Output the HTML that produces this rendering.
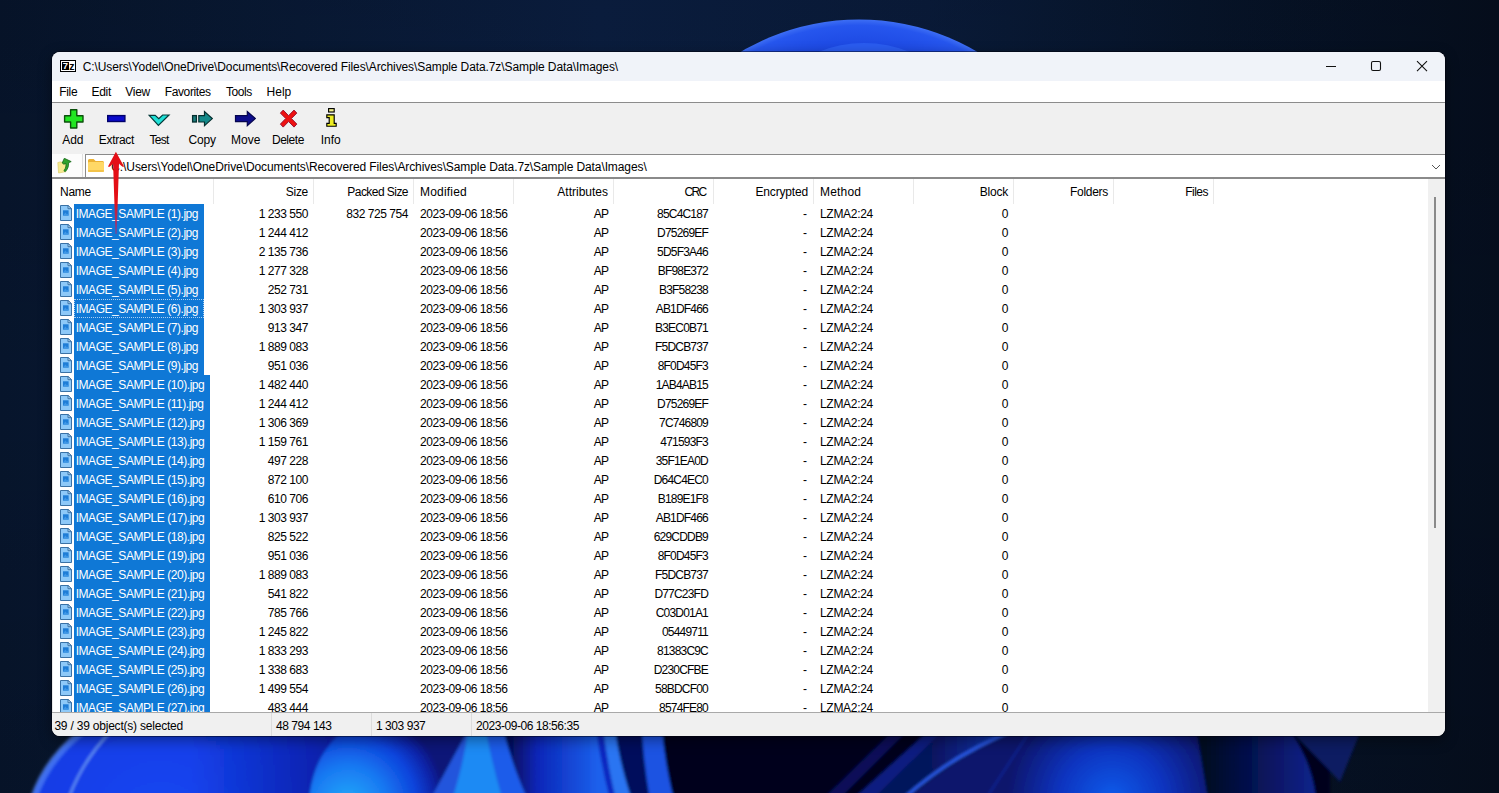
<!DOCTYPE html>
<html lang="en"><head><meta charset="utf-8"><title>7-Zip</title>
<style>
*{box-sizing:border-box}
html,body{margin:0;padding:0}
body{width:1499px;height:793px;overflow:hidden;position:relative;background:#07142a;font-family:"Liberation Sans",sans-serif;font-size:12px;color:#000}
.wall{position:absolute;left:0;top:0}
.win{position:absolute;left:52px;top:52px;width:1393px;height:684px;border-radius:8px;overflow:hidden;background:#f0f0f0;box-shadow:0 0 0 1px rgba(0,0,10,.45),0 4px 14px rgba(0,0,0,.4)}
.tb{position:absolute;left:0;top:0;width:100%;height:29px;background:#f0f3f9}
.ico7{position:absolute;left:8px;top:8px;width:16px;height:12px;border:1px solid #000;background:#fff}
.ico7 .s7{position:absolute;left:1px;top:1px;width:7px;height:8px;background:#000;color:#fff;font:bold 9.5px/8.5px "Liberation Sans",sans-serif;text-align:center;overflow:hidden}
.ico7 .sz{position:absolute;left:8.2px;top:1.8px;width:5.4px;height:9px;color:#000;font:bold 10.5px/6.5px "Liberation Sans",sans-serif;text-align:center;overflow:hidden}
.ttl{position:absolute;left:30.7px;top:8px;line-height:15px;white-space:nowrap;letter-spacing:-.098px}
.ctl{position:absolute;right:1px;top:0}
.mb{position:absolute;left:0;top:29px;width:100%;height:21px;background:#fff}
.mb span{position:absolute;top:4px;line-height:15px;white-space:nowrap}
.tl{position:absolute;left:0;top:50px;width:100%;height:52px;background:#f0f0f0;border-top:1px solid #8c8c8c}
.tl .lb{position:absolute;top:80px;line-height:15px;white-space:nowrap}
.ab{position:absolute;left:0;top:102px;width:100%;height:25px;background:#fcfcfc;border-bottom:2px solid #8a8a8a}
.up{position:absolute;left:5px;top:4px;width:16px;height:16px}
.addr{position:absolute;left:33px;top:0;right:0;height:23px;background:#fff;border-top:1px solid #8a8a8a;border-left:1px solid #8a8a8a;box-shadow:-2px 0 0 #fcfcfc,-3px 0 0 #dedede}
.fold{position:absolute;left:2px;top:4px}
.atx{position:absolute;left:25.3px;top:5px;line-height:15px;white-space:nowrap;letter-spacing:-.098px}
.chev{position:absolute;right:4.5px;top:9px}
.lv{position:absolute;left:0;top:127px;width:100%;height:533px;background:#fff;overflow:hidden;border-left:1px solid #e8e8e8}
.hd{position:absolute;left:0;top:0;width:100%;height:25px}
.h{position:absolute;top:0;height:25px;border-right:1px solid #e9e9e9;line-height:15px;padding:6px 5px 0 7px;white-space:nowrap}
.h.ar{text-align:right}
.r{position:absolute;left:0;width:1180px;height:19px;line-height:21px;white-space:nowrap}
.fi{position:absolute;left:7px;top:1px}
.nm{position:absolute;left:21px;top:0;height:19px;background:#0f78d6;color:#fff;padding-left:1.7px;letter-spacing:-.45px;overflow:hidden}
.nm.w1{width:130px}
.nm.w2{width:136px}
.foc .nm{outline:1px dotted rgba(235,245,255,.7);outline-offset:-1px}
.c{position:absolute;top:0;height:19px}
.num,.dt{letter-spacing:-.45px}
.crc{letter-spacing:-.8px}
.ap{letter-spacing:-.9px}
.mt{letter-spacing:-.3px}
.c1{right:925px}.c2{right:825px}.c3{left:367px}.c4{right:625px}.c5{right:525px}.c6{right:426px}.c7{left:767px}.c8{right:225px}
.sb{position:absolute;right:0;top:0;width:17px;height:100%;background:#f0f0f0}
.th{position:absolute;left:6px;top:18px;width:2px;height:331px;background:#8a8a8a}
.st{position:absolute;left:0;top:660px;width:100%;height:24px;background:#f0f0f0;border-top:1px solid #a9a9a9}
.st span{position:absolute;top:0;height:23px;line-height:15px;padding-top:6px;white-space:nowrap}
.s1{left:2.4px;letter-spacing:-.21px}
.s2{left:219px;padding-left:4px;border-left:1px solid #dcdcdc;letter-spacing:-.45px}
.s3{left:319px;padding-left:4px;border-left:1px solid #dcdcdc;letter-spacing:-.45px}
.s4{left:419px;padding-left:4px;border-left:1px solid #dcdcdc;letter-spacing:-.45px}
.arrow{position:absolute}

</style></head>
<body>
<svg class="wall" width="1499" height="793" viewBox="0 0 1499 793">
  <defs>
    <linearGradient id="bg" x1="0" y1="0" x2="1" y2="0">
      <stop offset="0" stop-color="#07152c"/><stop offset=".4" stop-color="#0b1f42"/><stop offset=".62" stop-color="#0a1c3c"/><stop offset=".8" stop-color="#07152b"/><stop offset="1" stop-color="#050e1e"/>
    </linearGradient>
    <linearGradient id="bgv" x1="0" y1="0" x2="0" y2="1">
      <stop offset="0" stop-color="#000" stop-opacity=".1"/><stop offset=".5" stop-color="#000" stop-opacity="0"/><stop offset="1" stop-color="#000" stop-opacity=".1"/>
    </linearGradient>
    <radialGradient id="gt" cx="859" cy="252.5" r="233" gradientUnits="userSpaceOnUse">
      <stop offset=".88" stop-color="#1c48e2"/><stop offset=".975" stop-color="#2656ee"/><stop offset="1" stop-color="#3d6ef4"/>
    </radialGradient>
    <radialGradient id="ga" cx="160" cy="830" r="330" gradientUnits="userSpaceOnUse">
      <stop offset="0" stop-color="#1648f4"/><stop offset=".5" stop-color="#1038e0"/><stop offset="1" stop-color="#0a1f9c"/>
    </radialGradient>
    <radialGradient id="gb" cx="348" cy="805" r="98" gradientUnits="userSpaceOnUse">
      <stop offset="0" stop-color="#24acfa"/><stop offset=".4" stop-color="#1878f2"/><stop offset=".7" stop-color="#0d44dc"/><stop offset=".88" stop-color="#0a24a8"/><stop offset="1" stop-color="#0a1478"/>
    </radialGradient>
    <linearGradient id="gc" x1="505" y1="0" x2="598" y2="0" gradientUnits="userSpaceOnUse">
      <stop offset="0" stop-color="#050a4c"/><stop offset=".35" stop-color="#0a26b8"/><stop offset="1" stop-color="#1c60ec"/>
    </linearGradient>
    <radialGradient id="gd" cx="1112" cy="800" r="105" gradientUnits="userSpaceOnUse">
      <stop offset="0" stop-color="#0a5cec"/><stop offset=".5" stop-color="#0a34c0"/><stop offset="1" stop-color="#08166c"/>
    </radialGradient>
    <linearGradient id="ge" x1="1205" y1="0" x2="1312" y2="0" gradientUnits="userSpaceOnUse">
      <stop offset="0" stop-color="#030722"/><stop offset=".6" stop-color="#071560"/><stop offset="1" stop-color="#0a2288"/>
    </linearGradient>
    <linearGradient id="gf" x1="930" y1="0" x2="1015" y2="0" gradientUnits="userSpaceOnUse">
      <stop offset="0" stop-color="#06125c"/><stop offset="1" stop-color="#143cc0"/>
    </linearGradient>
    <linearGradient id="gh" x1="190" y1="0" x2="335" y2="0" gradientUnits="userSpaceOnUse"><stop offset="0" stop-color="#0a1fa4" stop-opacity="0"/><stop offset="1" stop-color="#08189a" stop-opacity=".8"/></linearGradient>
    <filter id="b1" x="-5%" y="-20%" width="110%" height="140%"><feGaussianBlur stdDeviation="1.5"/></filter>
    <filter id="b3" x="-5%" y="-30%" width="110%" height="160%"><feGaussianBlur stdDeviation="3"/></filter>
  </defs>
  <rect width="1499" height="793" fill="url(#bg)"/>
  <rect width="1499" height="793" fill="url(#bgv)"/>
  <!-- top bloom -->
  <circle cx="859" cy="252.5" r="233" fill="url(#gt)"/>
  <circle cx="864" cy="164" r="121" fill="#2a5cf0"/>
  <!-- bottom bloom -->
  <g filter="url(#b1)">
    <path d="M28 810C36 778 54 752 84 728H720V810Z" fill="url(#ga)"/>
    <path d="M33 800C42 772 58 750 84 730" fill="none" stroke="#4f80f4" stroke-width="7" opacity=".75"/>
    <path d="M68 800C78 772 92 750 114 728" fill="none" stroke="#6a9cf6" stroke-width="1.8"/>
    <path d="M190 728H345L310 800H190Z" fill="url(#gh)"/>
    <path d="M309 800C312 770 322 748 346 728H470L450 800Z" fill="url(#gb)"/>
    
    <path d="M430 800L468 730L476 730L452 800Z" fill="#2454dc"/>
    <path d="M452 800C460 775 466 750 468 728H486C490 752 496 776 503 800Z" fill="#1b8af4"/>
    <path d="M486 728H503C509 752 517 776 528 800H503C496 776 490 752 486 728Z" fill="#1c5cea"/>
    <path d="M503 728H600L612 800H528C517 776 509 752 503 728Z" fill="url(#gc)"/>
    <path d="M596 728H603C606 752 610 776 616 800H610C604 776 599 752 596 728Z" fill="#0a28c0"/>
    <path d="M603 728H615C618 752 624 776 632 800H616C610 776 606 752 603 728Z" fill="#2c74f2"/>
    <path d="M615 728H642C643 752 646 776 650 800H632C624 776 618 752 615 728Z" fill="#060c5c"/>
    <path d="M642 728H662C664 752 668 776 674 800H650C646 776 643 752 642 728Z" fill="#1a52e2"/>
    <path d="M662 728H1330V800H674C668 776 664 752 662 728Z" fill="#02051e"/>
    <path d="M896 728L822 800H838L910 728Z" fill="#071058"/>
    <path d="M932 728L852 800H872L946 728Z" fill="#0a1e80"/>
    <path d="M946 728H1018C975 745 935 770 900 800H872Z" fill="url(#gf)"/>
    <path d="M1020 728C975 745 935 770 902 800" fill="none" stroke="#2a5cec" stroke-width="3"/>
    <path d="M1022 728C978 746 938 771 906 800H1215L1200 728Z" fill="url(#gd)"/>
    <path d="M1032 728L985 800" fill="none" stroke="#0a2cac" stroke-width="2" opacity=".6"/>
    <path d="M1196 728L1208 800H1316C1314 775 1304 750 1288 728Z" fill="url(#ge)"/>
    <path d="M1288 728H1362L1340 782C1325 765 1305 745 1288 728Z" fill="#091a62"/>
  </g>
</svg>

<div class="win">
  <div class="tb">
    <div class="ico7"><span class="s7">7</span><span class="sz">z</span></div>
    <div class="ttl">C:\Users\Yodel\OneDrive\Documents\Recovered Files\Archives\Sample Data.7z\Sample Data\Images\</div>
    <svg class="ctl" width="140" height="29" viewBox="0 0 140 29">
      <path d="M22 14.5H32" stroke="#111" stroke-width="1.1" fill="none"/>
      <rect x="67.5" y="9.5" width="9" height="9" rx="1.5" fill="none" stroke="#111" stroke-width="1.1"/>
      <path d="M113 9.2L123 19.2M123 9.2L113 19.2" stroke="#111" stroke-width="1.1" fill="none"/>
    </svg>
  </div>
  <div class="mb"><span style="left:7.3px;letter-spacing:-.35px">File</span><span style="left:39.5px;letter-spacing:-.3px">Edit</span><span style="left:73.2px;letter-spacing:-.25px">View</span><span style="left:112.7px;letter-spacing:-.37px">Favorites</span><span style="left:174px;letter-spacing:-.45px">Tools</span><span style="left:214.6px">Help</span></div>
  <div class="tl">
    <svg class="tis" width="300" height="30" viewBox="0 0 300 30" style="position:absolute;left:0;top:3px">
      <!-- Add -->
      <path d="M18.6 3.7H24.8V9.8H31V16H24.8V22H18.6V16H12.6V9.8H18.6Z" fill="#22e622" stroke="#0b4f0b" stroke-width="1.4" stroke-linejoin="round"/>
      <!-- Extract -->
      <rect x="55.7" y="9.6" width="17.2" height="5.9" fill="#0a0acc" stroke="#00006a" stroke-width="1.4"/>
      <!-- Test -->
      <path d="M97.2 9.4H103.2L106.8 12.6L110.6 9H117L106.4 19.4Z" fill="#1fe0d6" stroke="#063a3a" stroke-width="1.2" stroke-linejoin="miter"/>
      <!-- Copy -->
      <rect x="140.6" y="9.6" width="3.8" height="6.4" fill="#1c7f7f" stroke="#062f2f" stroke-width="1.3"/>
      <path d="M146.8 9.6H152.5V5.6L160.3 12.6L152.5 19.6V16H146.8Z" fill="#138a8a" stroke="#062f2f" stroke-width="1.2" stroke-linejoin="miter"/>
      <!-- Move -->
      <path d="M183.5 9.6H195.3V5.5L203.3 12.5L195.3 19.6V15.6H183.5Z" fill="#0d0d8c" stroke="#05054e" stroke-width="1.2"/>
      <!-- Delete -->
      <path transform="translate(0,-.5)" d="M228.4 7.6L231.2 4.6L236.6 10.2L242 4.6L244.8 7.6L239.4 13L244.8 18.6L242 21.6L236.6 16L231.2 21.6L228.4 18.6L233.8 13Z" fill="#ee1111" stroke="#9c1230" stroke-width="1"/>
      <!-- Info -->
      <rect x="276.6" y="2.6" width="5.6" height="3.4" fill="#f4f48a" stroke="#000" stroke-width="1.15"/>
      <path d="M274.8 8.8H282.2V17.4H284.2V20.2H274.8V17.4H277.2V11.6H274.8Z" fill="#eeee22" stroke="#000" stroke-width="1.15" stroke-linejoin="miter"/>
    </svg>
    <span class="lb" style="left:10.2px;top:30px">Add</span>
    <span class="lb" style="left:46.8px;top:30px;letter-spacing:-.3px">Extract</span>
    <span class="lb" style="left:97.5px;top:30px;letter-spacing:-.7px">Test</span>
    <span class="lb" style="left:136.5px;top:30px;letter-spacing:-.18px">Copy</span>
    <span class="lb" style="left:179px;top:30px">Move</span>
    <span class="lb" style="left:219.9px;top:30px;letter-spacing:-.43px">Delete</span>
    <span class="lb" style="left:268.7px;top:30px">Info</span>

  </div>
  <div class="ab">
    <div class="up"><svg width="16" height="16" viewBox="0 0 16 16"><path d="M.8 4.6L3.2 3.9L8.2 5.2L9 13.6L1.6 15Z" fill="#f6ea8e" stroke="#dccd6a" stroke-width=".7"/><path d="M5.2 5L7.3.3L14.2 3.6L11.6 4.7C11.9 8.2 10.6 11.6 8.1 13.7L6.9 12.6C8.9 10.2 9.3 7.7 8.8 5.4L6.9 6.2Z" fill="#2fa32c" stroke="#166a18" stroke-width=".8" stroke-linejoin="round"/></svg></div>
    <div class="addr">
      <svg class="fold" width="16" height="13" viewBox="0 0 16 13"><path d="M0 1.6C0 .7 .7 0 1.6 0H5.6L7.6 2H14.4C15.3 2 16 2.7 16 3.6V11.4C16 12.3 15.3 13 14.4 13H1.6C.7 13 0 12.3 0 11.4Z" fill="#ecb234"/><path d="M0 4.3C0 3.4 .7 2.9 1.6 2.9H14.4C15.3 2.9 16 3.4 16 4.3V11.4C16 12.3 15.3 13 14.4 13H1.6C.7 13 0 12.3 0 11.4Z" fill="#ffd866"/><path d="M0 11C0 12.3 .7 13 1.6 13H14.4C15.3 13 16 12.3 16 11Z" fill="#f3c349"/></svg>
      <span class="atx">C:\Users\Yodel\OneDrive\Documents\Recovered Files\Archives\Sample Data.7z\Sample Data\Images\</span>
      <svg class="chev" width="10" height="6" viewBox="0 0 10 6"><path d="M1 1L5 5L9 1" fill="none" stroke="#555" stroke-width="1"/></svg>
    </div>
  </div>
  <div class="lv">
    <div class="hd"><div class="h al" style="left:0px;width:161px"><span style="letter-spacing:-0.25px">Name</span></div><div class="h ar" style="left:160px;width:101px"><span style="letter-spacing:-0.3px">Size</span></div><div class="h ar" style="left:260px;width:101px"><span style="letter-spacing:-0.55px">Packed Size</span></div><div class="h al" style="left:360px;width:101px"><span style="letter-spacing:0.2px">Modified</span></div><div class="h ar" style="left:460px;width:101px"><span style="letter-spacing:0px">Attributes</span></div><div class="h ar" style="left:560px;width:101px"><span style="letter-spacing:-1.6px;margin-right:2.4px">CRC</span></div><div class="h ar" style="left:660px;width:101px"><span style="letter-spacing:-0.17px">Encrypted</span></div><div class="h al" style="left:760px;width:101px"><span style="letter-spacing:0.2px">Method</span></div><div class="h ar" style="left:860px;width:101px"><span style="letter-spacing:-0.2px">Block</span></div><div class="h ar" style="left:960px;width:101px"><span style="letter-spacing:-0.3px">Folders</span></div><div class="h ar" style="left:1060px;width:101px"><span style="letter-spacing:-0.5px">Files</span></div></div>
    <div class="r" style="top:25px"><svg class="fi" width="12" height="16" viewBox="0 0 12 16"><path d="M.5 .5H8L11.5 3.7V15.5H.5Z" fill="#8ec9f8" stroke="#3a72a6"/><path d="M8 .5V3.7H11.5Z" fill="#c2e2fb" stroke="#3a72a6" stroke-linejoin="round"/><rect x="3" y="5.3" width="5.6" height="5.3" fill="#1f7dd6"/><path d="M3 10.6L5.4 7.6L7 9.4L8.6 8V10.6Z" fill="#3f97e6"/></svg><span class="nm w1">IMAGE_SAMPLE (1).jpg</span><span class="c c1 num">1 233 550</span><span class="c c2 num">832 725 754</span><span class="c c3 dt">2023-09-06 18:56</span><span class="c c4 ap">AP</span><span class="c c5 crc">85C4C187</span><span class="c c6">-</span><span class="c c7 mt">LZMA2:24</span><span class="c c8 num">0</span></div><div class="r" style="top:44px"><svg class="fi" width="12" height="16" viewBox="0 0 12 16"><path d="M.5 .5H8L11.5 3.7V15.5H.5Z" fill="#8ec9f8" stroke="#3a72a6"/><path d="M8 .5V3.7H11.5Z" fill="#c2e2fb" stroke="#3a72a6" stroke-linejoin="round"/><rect x="3" y="5.3" width="5.6" height="5.3" fill="#1f7dd6"/><path d="M3 10.6L5.4 7.6L7 9.4L8.6 8V10.6Z" fill="#3f97e6"/></svg><span class="nm w1">IMAGE_SAMPLE (2).jpg</span><span class="c c1 num">1 244 412</span><span class="c c2 num"></span><span class="c c3 dt">2023-09-06 18:56</span><span class="c c4 ap">AP</span><span class="c c5 crc">D75269EF</span><span class="c c6">-</span><span class="c c7 mt">LZMA2:24</span><span class="c c8 num">0</span></div><div class="r" style="top:63px"><svg class="fi" width="12" height="16" viewBox="0 0 12 16"><path d="M.5 .5H8L11.5 3.7V15.5H.5Z" fill="#8ec9f8" stroke="#3a72a6"/><path d="M8 .5V3.7H11.5Z" fill="#c2e2fb" stroke="#3a72a6" stroke-linejoin="round"/><rect x="3" y="5.3" width="5.6" height="5.3" fill="#1f7dd6"/><path d="M3 10.6L5.4 7.6L7 9.4L8.6 8V10.6Z" fill="#3f97e6"/></svg><span class="nm w1">IMAGE_SAMPLE (3).jpg</span><span class="c c1 num">2 135 736</span><span class="c c2 num"></span><span class="c c3 dt">2023-09-06 18:56</span><span class="c c4 ap">AP</span><span class="c c5 crc">5D5F3A46</span><span class="c c6">-</span><span class="c c7 mt">LZMA2:24</span><span class="c c8 num">0</span></div><div class="r" style="top:82px"><svg class="fi" width="12" height="16" viewBox="0 0 12 16"><path d="M.5 .5H8L11.5 3.7V15.5H.5Z" fill="#8ec9f8" stroke="#3a72a6"/><path d="M8 .5V3.7H11.5Z" fill="#c2e2fb" stroke="#3a72a6" stroke-linejoin="round"/><rect x="3" y="5.3" width="5.6" height="5.3" fill="#1f7dd6"/><path d="M3 10.6L5.4 7.6L7 9.4L8.6 8V10.6Z" fill="#3f97e6"/></svg><span class="nm w1">IMAGE_SAMPLE (4).jpg</span><span class="c c1 num">1 277 328</span><span class="c c2 num"></span><span class="c c3 dt">2023-09-06 18:56</span><span class="c c4 ap">AP</span><span class="c c5 crc">BF98E372</span><span class="c c6">-</span><span class="c c7 mt">LZMA2:24</span><span class="c c8 num">0</span></div><div class="r" style="top:101px"><svg class="fi" width="12" height="16" viewBox="0 0 12 16"><path d="M.5 .5H8L11.5 3.7V15.5H.5Z" fill="#8ec9f8" stroke="#3a72a6"/><path d="M8 .5V3.7H11.5Z" fill="#c2e2fb" stroke="#3a72a6" stroke-linejoin="round"/><rect x="3" y="5.3" width="5.6" height="5.3" fill="#1f7dd6"/><path d="M3 10.6L5.4 7.6L7 9.4L8.6 8V10.6Z" fill="#3f97e6"/></svg><span class="nm w1">IMAGE_SAMPLE (5).jpg</span><span class="c c1 num">252 731</span><span class="c c2 num"></span><span class="c c3 dt">2023-09-06 18:56</span><span class="c c4 ap">AP</span><span class="c c5 crc">B3F58238</span><span class="c c6">-</span><span class="c c7 mt">LZMA2:24</span><span class="c c8 num">0</span></div><div class="r foc" style="top:120px"><svg class="fi" width="12" height="16" viewBox="0 0 12 16"><path d="M.5 .5H8L11.5 3.7V15.5H.5Z" fill="#8ec9f8" stroke="#3a72a6"/><path d="M8 .5V3.7H11.5Z" fill="#c2e2fb" stroke="#3a72a6" stroke-linejoin="round"/><rect x="3" y="5.3" width="5.6" height="5.3" fill="#1f7dd6"/><path d="M3 10.6L5.4 7.6L7 9.4L8.6 8V10.6Z" fill="#3f97e6"/></svg><span class="nm w1">IMAGE_SAMPLE (6).jpg</span><span class="c c1 num">1 303 937</span><span class="c c2 num"></span><span class="c c3 dt">2023-09-06 18:56</span><span class="c c4 ap">AP</span><span class="c c5 crc">AB1DF466</span><span class="c c6">-</span><span class="c c7 mt">LZMA2:24</span><span class="c c8 num">0</span></div><div class="r" style="top:139px"><svg class="fi" width="12" height="16" viewBox="0 0 12 16"><path d="M.5 .5H8L11.5 3.7V15.5H.5Z" fill="#8ec9f8" stroke="#3a72a6"/><path d="M8 .5V3.7H11.5Z" fill="#c2e2fb" stroke="#3a72a6" stroke-linejoin="round"/><rect x="3" y="5.3" width="5.6" height="5.3" fill="#1f7dd6"/><path d="M3 10.6L5.4 7.6L7 9.4L8.6 8V10.6Z" fill="#3f97e6"/></svg><span class="nm w1">IMAGE_SAMPLE (7).jpg</span><span class="c c1 num">913 347</span><span class="c c2 num"></span><span class="c c3 dt">2023-09-06 18:56</span><span class="c c4 ap">AP</span><span class="c c5 crc">B3EC0B71</span><span class="c c6">-</span><span class="c c7 mt">LZMA2:24</span><span class="c c8 num">0</span></div><div class="r" style="top:158px"><svg class="fi" width="12" height="16" viewBox="0 0 12 16"><path d="M.5 .5H8L11.5 3.7V15.5H.5Z" fill="#8ec9f8" stroke="#3a72a6"/><path d="M8 .5V3.7H11.5Z" fill="#c2e2fb" stroke="#3a72a6" stroke-linejoin="round"/><rect x="3" y="5.3" width="5.6" height="5.3" fill="#1f7dd6"/><path d="M3 10.6L5.4 7.6L7 9.4L8.6 8V10.6Z" fill="#3f97e6"/></svg><span class="nm w1">IMAGE_SAMPLE (8).jpg</span><span class="c c1 num">1 889 083</span><span class="c c2 num"></span><span class="c c3 dt">2023-09-06 18:56</span><span class="c c4 ap">AP</span><span class="c c5 crc">F5DCB737</span><span class="c c6">-</span><span class="c c7 mt">LZMA2:24</span><span class="c c8 num">0</span></div><div class="r" style="top:177px"><svg class="fi" width="12" height="16" viewBox="0 0 12 16"><path d="M.5 .5H8L11.5 3.7V15.5H.5Z" fill="#8ec9f8" stroke="#3a72a6"/><path d="M8 .5V3.7H11.5Z" fill="#c2e2fb" stroke="#3a72a6" stroke-linejoin="round"/><rect x="3" y="5.3" width="5.6" height="5.3" fill="#1f7dd6"/><path d="M3 10.6L5.4 7.6L7 9.4L8.6 8V10.6Z" fill="#3f97e6"/></svg><span class="nm w1">IMAGE_SAMPLE (9).jpg</span><span class="c c1 num">951 036</span><span class="c c2 num"></span><span class="c c3 dt">2023-09-06 18:56</span><span class="c c4 ap">AP</span><span class="c c5 crc">8F0D45F3</span><span class="c c6">-</span><span class="c c7 mt">LZMA2:24</span><span class="c c8 num">0</span></div><div class="r" style="top:196px"><svg class="fi" width="12" height="16" viewBox="0 0 12 16"><path d="M.5 .5H8L11.5 3.7V15.5H.5Z" fill="#8ec9f8" stroke="#3a72a6"/><path d="M8 .5V3.7H11.5Z" fill="#c2e2fb" stroke="#3a72a6" stroke-linejoin="round"/><rect x="3" y="5.3" width="5.6" height="5.3" fill="#1f7dd6"/><path d="M3 10.6L5.4 7.6L7 9.4L8.6 8V10.6Z" fill="#3f97e6"/></svg><span class="nm w2">IMAGE_SAMPLE (10).jpg</span><span class="c c1 num">1 482 440</span><span class="c c2 num"></span><span class="c c3 dt">2023-09-06 18:56</span><span class="c c4 ap">AP</span><span class="c c5 crc">1AB4AB15</span><span class="c c6">-</span><span class="c c7 mt">LZMA2:24</span><span class="c c8 num">0</span></div><div class="r" style="top:215px"><svg class="fi" width="12" height="16" viewBox="0 0 12 16"><path d="M.5 .5H8L11.5 3.7V15.5H.5Z" fill="#8ec9f8" stroke="#3a72a6"/><path d="M8 .5V3.7H11.5Z" fill="#c2e2fb" stroke="#3a72a6" stroke-linejoin="round"/><rect x="3" y="5.3" width="5.6" height="5.3" fill="#1f7dd6"/><path d="M3 10.6L5.4 7.6L7 9.4L8.6 8V10.6Z" fill="#3f97e6"/></svg><span class="nm w2">IMAGE_SAMPLE (11).jpg</span><span class="c c1 num">1 244 412</span><span class="c c2 num"></span><span class="c c3 dt">2023-09-06 18:56</span><span class="c c4 ap">AP</span><span class="c c5 crc">D75269EF</span><span class="c c6">-</span><span class="c c7 mt">LZMA2:24</span><span class="c c8 num">0</span></div><div class="r" style="top:234px"><svg class="fi" width="12" height="16" viewBox="0 0 12 16"><path d="M.5 .5H8L11.5 3.7V15.5H.5Z" fill="#8ec9f8" stroke="#3a72a6"/><path d="M8 .5V3.7H11.5Z" fill="#c2e2fb" stroke="#3a72a6" stroke-linejoin="round"/><rect x="3" y="5.3" width="5.6" height="5.3" fill="#1f7dd6"/><path d="M3 10.6L5.4 7.6L7 9.4L8.6 8V10.6Z" fill="#3f97e6"/></svg><span class="nm w2">IMAGE_SAMPLE (12).jpg</span><span class="c c1 num">1 306 369</span><span class="c c2 num"></span><span class="c c3 dt">2023-09-06 18:56</span><span class="c c4 ap">AP</span><span class="c c5 crc">7C746809</span><span class="c c6">-</span><span class="c c7 mt">LZMA2:24</span><span class="c c8 num">0</span></div><div class="r" style="top:253px"><svg class="fi" width="12" height="16" viewBox="0 0 12 16"><path d="M.5 .5H8L11.5 3.7V15.5H.5Z" fill="#8ec9f8" stroke="#3a72a6"/><path d="M8 .5V3.7H11.5Z" fill="#c2e2fb" stroke="#3a72a6" stroke-linejoin="round"/><rect x="3" y="5.3" width="5.6" height="5.3" fill="#1f7dd6"/><path d="M3 10.6L5.4 7.6L7 9.4L8.6 8V10.6Z" fill="#3f97e6"/></svg><span class="nm w2">IMAGE_SAMPLE (13).jpg</span><span class="c c1 num">1 159 761</span><span class="c c2 num"></span><span class="c c3 dt">2023-09-06 18:56</span><span class="c c4 ap">AP</span><span class="c c5 crc">471593F3</span><span class="c c6">-</span><span class="c c7 mt">LZMA2:24</span><span class="c c8 num">0</span></div><div class="r" style="top:272px"><svg class="fi" width="12" height="16" viewBox="0 0 12 16"><path d="M.5 .5H8L11.5 3.7V15.5H.5Z" fill="#8ec9f8" stroke="#3a72a6"/><path d="M8 .5V3.7H11.5Z" fill="#c2e2fb" stroke="#3a72a6" stroke-linejoin="round"/><rect x="3" y="5.3" width="5.6" height="5.3" fill="#1f7dd6"/><path d="M3 10.6L5.4 7.6L7 9.4L8.6 8V10.6Z" fill="#3f97e6"/></svg><span class="nm w2">IMAGE_SAMPLE (14).jpg</span><span class="c c1 num">497 228</span><span class="c c2 num"></span><span class="c c3 dt">2023-09-06 18:56</span><span class="c c4 ap">AP</span><span class="c c5 crc">35F1EA0D</span><span class="c c6">-</span><span class="c c7 mt">LZMA2:24</span><span class="c c8 num">0</span></div><div class="r" style="top:291px"><svg class="fi" width="12" height="16" viewBox="0 0 12 16"><path d="M.5 .5H8L11.5 3.7V15.5H.5Z" fill="#8ec9f8" stroke="#3a72a6"/><path d="M8 .5V3.7H11.5Z" fill="#c2e2fb" stroke="#3a72a6" stroke-linejoin="round"/><rect x="3" y="5.3" width="5.6" height="5.3" fill="#1f7dd6"/><path d="M3 10.6L5.4 7.6L7 9.4L8.6 8V10.6Z" fill="#3f97e6"/></svg><span class="nm w2">IMAGE_SAMPLE (15).jpg</span><span class="c c1 num">872 100</span><span class="c c2 num"></span><span class="c c3 dt">2023-09-06 18:56</span><span class="c c4 ap">AP</span><span class="c c5 crc">D64C4EC0</span><span class="c c6">-</span><span class="c c7 mt">LZMA2:24</span><span class="c c8 num">0</span></div><div class="r" style="top:310px"><svg class="fi" width="12" height="16" viewBox="0 0 12 16"><path d="M.5 .5H8L11.5 3.7V15.5H.5Z" fill="#8ec9f8" stroke="#3a72a6"/><path d="M8 .5V3.7H11.5Z" fill="#c2e2fb" stroke="#3a72a6" stroke-linejoin="round"/><rect x="3" y="5.3" width="5.6" height="5.3" fill="#1f7dd6"/><path d="M3 10.6L5.4 7.6L7 9.4L8.6 8V10.6Z" fill="#3f97e6"/></svg><span class="nm w2">IMAGE_SAMPLE (16).jpg</span><span class="c c1 num">610 706</span><span class="c c2 num"></span><span class="c c3 dt">2023-09-06 18:56</span><span class="c c4 ap">AP</span><span class="c c5 crc">B189E1F8</span><span class="c c6">-</span><span class="c c7 mt">LZMA2:24</span><span class="c c8 num">0</span></div><div class="r" style="top:329px"><svg class="fi" width="12" height="16" viewBox="0 0 12 16"><path d="M.5 .5H8L11.5 3.7V15.5H.5Z" fill="#8ec9f8" stroke="#3a72a6"/><path d="M8 .5V3.7H11.5Z" fill="#c2e2fb" stroke="#3a72a6" stroke-linejoin="round"/><rect x="3" y="5.3" width="5.6" height="5.3" fill="#1f7dd6"/><path d="M3 10.6L5.4 7.6L7 9.4L8.6 8V10.6Z" fill="#3f97e6"/></svg><span class="nm w2">IMAGE_SAMPLE (17).jpg</span><span class="c c1 num">1 303 937</span><span class="c c2 num"></span><span class="c c3 dt">2023-09-06 18:56</span><span class="c c4 ap">AP</span><span class="c c5 crc">AB1DF466</span><span class="c c6">-</span><span class="c c7 mt">LZMA2:24</span><span class="c c8 num">0</span></div><div class="r" style="top:348px"><svg class="fi" width="12" height="16" viewBox="0 0 12 16"><path d="M.5 .5H8L11.5 3.7V15.5H.5Z" fill="#8ec9f8" stroke="#3a72a6"/><path d="M8 .5V3.7H11.5Z" fill="#c2e2fb" stroke="#3a72a6" stroke-linejoin="round"/><rect x="3" y="5.3" width="5.6" height="5.3" fill="#1f7dd6"/><path d="M3 10.6L5.4 7.6L7 9.4L8.6 8V10.6Z" fill="#3f97e6"/></svg><span class="nm w2">IMAGE_SAMPLE (18).jpg</span><span class="c c1 num">825 522</span><span class="c c2 num"></span><span class="c c3 dt">2023-09-06 18:56</span><span class="c c4 ap">AP</span><span class="c c5 crc">629CDDB9</span><span class="c c6">-</span><span class="c c7 mt">LZMA2:24</span><span class="c c8 num">0</span></div><div class="r" style="top:367px"><svg class="fi" width="12" height="16" viewBox="0 0 12 16"><path d="M.5 .5H8L11.5 3.7V15.5H.5Z" fill="#8ec9f8" stroke="#3a72a6"/><path d="M8 .5V3.7H11.5Z" fill="#c2e2fb" stroke="#3a72a6" stroke-linejoin="round"/><rect x="3" y="5.3" width="5.6" height="5.3" fill="#1f7dd6"/><path d="M3 10.6L5.4 7.6L7 9.4L8.6 8V10.6Z" fill="#3f97e6"/></svg><span class="nm w2">IMAGE_SAMPLE (19).jpg</span><span class="c c1 num">951 036</span><span class="c c2 num"></span><span class="c c3 dt">2023-09-06 18:56</span><span class="c c4 ap">AP</span><span class="c c5 crc">8F0D45F3</span><span class="c c6">-</span><span class="c c7 mt">LZMA2:24</span><span class="c c8 num">0</span></div><div class="r" style="top:386px"><svg class="fi" width="12" height="16" viewBox="0 0 12 16"><path d="M.5 .5H8L11.5 3.7V15.5H.5Z" fill="#8ec9f8" stroke="#3a72a6"/><path d="M8 .5V3.7H11.5Z" fill="#c2e2fb" stroke="#3a72a6" stroke-linejoin="round"/><rect x="3" y="5.3" width="5.6" height="5.3" fill="#1f7dd6"/><path d="M3 10.6L5.4 7.6L7 9.4L8.6 8V10.6Z" fill="#3f97e6"/></svg><span class="nm w2">IMAGE_SAMPLE (20).jpg</span><span class="c c1 num">1 889 083</span><span class="c c2 num"></span><span class="c c3 dt">2023-09-06 18:56</span><span class="c c4 ap">AP</span><span class="c c5 crc">F5DCB737</span><span class="c c6">-</span><span class="c c7 mt">LZMA2:24</span><span class="c c8 num">0</span></div><div class="r" style="top:405px"><svg class="fi" width="12" height="16" viewBox="0 0 12 16"><path d="M.5 .5H8L11.5 3.7V15.5H.5Z" fill="#8ec9f8" stroke="#3a72a6"/><path d="M8 .5V3.7H11.5Z" fill="#c2e2fb" stroke="#3a72a6" stroke-linejoin="round"/><rect x="3" y="5.3" width="5.6" height="5.3" fill="#1f7dd6"/><path d="M3 10.6L5.4 7.6L7 9.4L8.6 8V10.6Z" fill="#3f97e6"/></svg><span class="nm w2">IMAGE_SAMPLE (21).jpg</span><span class="c c1 num">541 822</span><span class="c c2 num"></span><span class="c c3 dt">2023-09-06 18:56</span><span class="c c4 ap">AP</span><span class="c c5 crc">D77C23FD</span><span class="c c6">-</span><span class="c c7 mt">LZMA2:24</span><span class="c c8 num">0</span></div><div class="r" style="top:424px"><svg class="fi" width="12" height="16" viewBox="0 0 12 16"><path d="M.5 .5H8L11.5 3.7V15.5H.5Z" fill="#8ec9f8" stroke="#3a72a6"/><path d="M8 .5V3.7H11.5Z" fill="#c2e2fb" stroke="#3a72a6" stroke-linejoin="round"/><rect x="3" y="5.3" width="5.6" height="5.3" fill="#1f7dd6"/><path d="M3 10.6L5.4 7.6L7 9.4L8.6 8V10.6Z" fill="#3f97e6"/></svg><span class="nm w2">IMAGE_SAMPLE (22).jpg</span><span class="c c1 num">785 766</span><span class="c c2 num"></span><span class="c c3 dt">2023-09-06 18:56</span><span class="c c4 ap">AP</span><span class="c c5 crc">C03D01A1</span><span class="c c6">-</span><span class="c c7 mt">LZMA2:24</span><span class="c c8 num">0</span></div><div class="r" style="top:443px"><svg class="fi" width="12" height="16" viewBox="0 0 12 16"><path d="M.5 .5H8L11.5 3.7V15.5H.5Z" fill="#8ec9f8" stroke="#3a72a6"/><path d="M8 .5V3.7H11.5Z" fill="#c2e2fb" stroke="#3a72a6" stroke-linejoin="round"/><rect x="3" y="5.3" width="5.6" height="5.3" fill="#1f7dd6"/><path d="M3 10.6L5.4 7.6L7 9.4L8.6 8V10.6Z" fill="#3f97e6"/></svg><span class="nm w2">IMAGE_SAMPLE (23).jpg</span><span class="c c1 num">1 245 822</span><span class="c c2 num"></span><span class="c c3 dt">2023-09-06 18:56</span><span class="c c4 ap">AP</span><span class="c c5 crc">05449711</span><span class="c c6">-</span><span class="c c7 mt">LZMA2:24</span><span class="c c8 num">0</span></div><div class="r" style="top:462px"><svg class="fi" width="12" height="16" viewBox="0 0 12 16"><path d="M.5 .5H8L11.5 3.7V15.5H.5Z" fill="#8ec9f8" stroke="#3a72a6"/><path d="M8 .5V3.7H11.5Z" fill="#c2e2fb" stroke="#3a72a6" stroke-linejoin="round"/><rect x="3" y="5.3" width="5.6" height="5.3" fill="#1f7dd6"/><path d="M3 10.6L5.4 7.6L7 9.4L8.6 8V10.6Z" fill="#3f97e6"/></svg><span class="nm w2">IMAGE_SAMPLE (24).jpg</span><span class="c c1 num">1 833 293</span><span class="c c2 num"></span><span class="c c3 dt">2023-09-06 18:56</span><span class="c c4 ap">AP</span><span class="c c5 crc">81383C9C</span><span class="c c6">-</span><span class="c c7 mt">LZMA2:24</span><span class="c c8 num">0</span></div><div class="r" style="top:481px"><svg class="fi" width="12" height="16" viewBox="0 0 12 16"><path d="M.5 .5H8L11.5 3.7V15.5H.5Z" fill="#8ec9f8" stroke="#3a72a6"/><path d="M8 .5V3.7H11.5Z" fill="#c2e2fb" stroke="#3a72a6" stroke-linejoin="round"/><rect x="3" y="5.3" width="5.6" height="5.3" fill="#1f7dd6"/><path d="M3 10.6L5.4 7.6L7 9.4L8.6 8V10.6Z" fill="#3f97e6"/></svg><span class="nm w2">IMAGE_SAMPLE (25).jpg</span><span class="c c1 num">1 338 683</span><span class="c c2 num"></span><span class="c c3 dt">2023-09-06 18:56</span><span class="c c4 ap">AP</span><span class="c c5 crc">D230CFBE</span><span class="c c6">-</span><span class="c c7 mt">LZMA2:24</span><span class="c c8 num">0</span></div><div class="r" style="top:500px"><svg class="fi" width="12" height="16" viewBox="0 0 12 16"><path d="M.5 .5H8L11.5 3.7V15.5H.5Z" fill="#8ec9f8" stroke="#3a72a6"/><path d="M8 .5V3.7H11.5Z" fill="#c2e2fb" stroke="#3a72a6" stroke-linejoin="round"/><rect x="3" y="5.3" width="5.6" height="5.3" fill="#1f7dd6"/><path d="M3 10.6L5.4 7.6L7 9.4L8.6 8V10.6Z" fill="#3f97e6"/></svg><span class="nm w2">IMAGE_SAMPLE (26).jpg</span><span class="c c1 num">1 499 554</span><span class="c c2 num"></span><span class="c c3 dt">2023-09-06 18:56</span><span class="c c4 ap">AP</span><span class="c c5 crc">58BDCF00</span><span class="c c6">-</span><span class="c c7 mt">LZMA2:24</span><span class="c c8 num">0</span></div><div class="r" style="top:519px"><svg class="fi" width="12" height="16" viewBox="0 0 12 16"><path d="M.5 .5H8L11.5 3.7V15.5H.5Z" fill="#8ec9f8" stroke="#3a72a6"/><path d="M8 .5V3.7H11.5Z" fill="#c2e2fb" stroke="#3a72a6" stroke-linejoin="round"/><rect x="3" y="5.3" width="5.6" height="5.3" fill="#1f7dd6"/><path d="M3 10.6L5.4 7.6L7 9.4L8.6 8V10.6Z" fill="#3f97e6"/></svg><span class="nm w2">IMAGE_SAMPLE (27).jpg</span><span class="c c1 num">483 444</span><span class="c c2 num"></span><span class="c c3 dt">2023-09-06 18:56</span><span class="c c4 ap">AP</span><span class="c c5 crc">8574FE80</span><span class="c c6">-</span><span class="c c7 mt">LZMA2:24</span><span class="c c8 num">0</span></div>
    <div class="sb"><div class="th"></div></div>
  </div>
  <div class="st"><span class="s1">39 / 39 object(s) selected</span><span class="s2">48 794 143</span><span class="s3">1 303 937</span><span class="s4">2023-09-06 18:56:35</span></div>
</div>
<svg class="arrow" width="30" height="90" viewBox="0 0 30 90" style="left:101px;top:148px"><path d="M14.9 3.8L23 18.4C22.4 18.9 21.8 18.9 21.2 18.5L18 15.4L15.7 85.5C15.5 86.3 14.6 86.3 14.4 85.5L12.1 15.4L9 18.5C8.4 18.9 7.6 18.9 7 18.4Z" fill="url(#ag)"/><defs><linearGradient id="ag" x1="0" y1="0" x2="0" y2="90" gradientUnits="userSpaceOnUse"><stop offset="0" stop-color="#e40f16"/><stop offset=".6" stop-color="#e40f16"/><stop offset=".75" stop-color="#d21a3a" stop-opacity=".85"/><stop offset="1" stop-color="#b02878" stop-opacity=".55"/></linearGradient></defs></svg>
</body></html>
